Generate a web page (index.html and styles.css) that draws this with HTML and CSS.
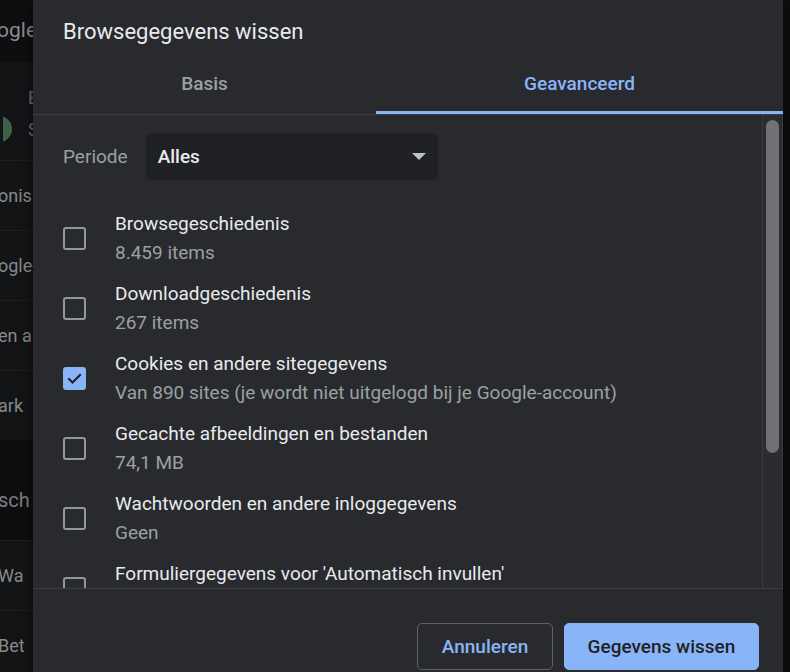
FILE: index.html
```html
<!DOCTYPE html>
<html lang="nl">
<head>
<meta charset="utf-8">
<title>Browsegegevens wissen</title>
<link rel="stylesheet" href="styles.css">
</head>
<body>
<div class="page">
  <div class="page-head">ogle</div>
  <div class="card">
    <div class="card-row profile">
      <span class="avatar-clip"><span class="avatar"></span></span>
      <div class="profile-text">
        <span class="dim">E</span>
        <span class="dim">S</span>
      </div>
    </div>
    <div class="card-row">onis</div>
    <div class="card-row">ogle-</div>
    <div class="card-row">en a</div>
    <div class="card-row">ark</div>
  </div>
  <div class="page-section">sch</div>
  <div class="card card-lower">
    <div class="card-row">Wa</div>
    <div class="card-row">Bet</div>
  </div>
</div>

<div class="dialog">
  <h1 class="dialog-title">Browsegegevens wissen</h1>
  <div class="tabs">
    <div class="tab tab-basic">Basis</div>
    <div class="tab tab-adv active">Geavanceerd</div>
  </div>
  <div class="body">
    <div class="scroll-content">
      <div class="period">
        <span class="period-label">Periode</span>
        <div class="select">
          <span>Alles</span>
          <span class="arrow"></span>
        </div>
      </div>
      <div class="option">
        <span class="box"></span>
        <div class="option-text">
          <div class="option-title">Browsegeschiedenis</div>
          <div class="option-sub">8.459 items</div>
        </div>
      </div>
      <div class="option">
        <span class="box"></span>
        <div class="option-text">
          <div class="option-title">Downloadgeschiedenis</div>
          <div class="option-sub">267 items</div>
        </div>
      </div>
      <div class="option">
        <span class="box checked">
          <svg viewBox="0 0 24 24" width="19" height="19"><path d="M5 12.5l4.5 4.5L19 7.5" fill="none" stroke="#202124" stroke-width="2.6" stroke-linecap="square"/></svg>
        </span>
        <div class="option-text">
          <div class="option-title">Cookies en andere sitegegevens</div>
          <div class="option-sub">Van 890 sites (je wordt niet uitgelogd bij je Google-account)</div>
        </div>
      </div>
      <div class="option">
        <span class="box"></span>
        <div class="option-text">
          <div class="option-title">Gecachte afbeeldingen en bestanden</div>
          <div class="option-sub">74,1 MB</div>
        </div>
      </div>
      <div class="option">
        <span class="box"></span>
        <div class="option-text">
          <div class="option-title">Wachtwoorden en andere inloggegevens</div>
          <div class="option-sub">Geen</div>
        </div>
      </div>
      <div class="option">
        <span class="box"></span>
        <div class="option-text">
          <div class="option-title">Formuliergegevens voor 'Automatisch invullen'</div>
          <div class="option-sub">Geen</div>
        </div>
      </div>
    </div>
    <div class="scrollbar"><div class="thumb"></div></div>
  </div>
  <div class="footer">
    <button class="btn btn-cancel">Annuleren</button>
    <button class="btn btn-primary">Gegevens wissen</button>
  </div>
</div>
</body>
</html>
```

FILE: styles.css
```css
* { box-sizing: border-box; }
html, body { height: 100%; }
body {
  margin: 0;
  background: #0d0e0f;
  font-family: Roboto, "Noto Sans", "Liberation Sans", sans-serif;
  overflow: hidden;
  position: relative;
}

/* background settings page (dimmed by scrim), clipped by the dialog edge */
.page {
  width: 33px;
  overflow: hidden;
  color: #87898c;
  font-size: 18px;
}
.page-head {
  height: 62px;
  padding-top: 18px;
  margin-left: -3px;
  font-size: 21px;
  color: #8b8d90;
  white-space: nowrap;
}
.card {
  background: #131416;
}
.card-row {
  height: 70px;
  display: flex;
  align-items: center;
  border-top: 1px solid #1d1e20;
  white-space: nowrap;
  margin-left: -2px;
}
.card-row:first-child { border-top: none; }
.profile { height: 98px; margin-left: 0; }
.avatar-clip {
  width: 9px;
  height: 26px;
  margin-left: 3px;
  margin-top: 36px;
  overflow: hidden;
  flex: none;
}
.avatar {
  display: block;
  width: 26px; height: 26px;
  margin-left: -17px;
  border-radius: 50%;
  background: #3d6149;
}
.profile-text {
  display: flex;
  flex-direction: column;
  gap: 11px;
  padding-left: 16px;
  margin-top: 4px;
}
.dim { color: #6b6d70; }
.page-section {
  height: 100px;
  display: flex;
  align-items: center;
  padding-top: 20px;
  font-size: 20px;
  color: #7c7e81;
  white-space: nowrap;
  margin-left: -2px;
}
.card-lower .card-row { border-top: 1px solid #1d1e20; }

/* dialog */
.dialog {
  position: absolute;
  left: 33px;
  top: 0;
  width: 750px;
  height: 700px;
  background: #292a2d;
  display: flex;
  flex-direction: column;
  box-shadow: 0 0 12px rgba(0,0,0,0.5);
}
.dialog-title {
  margin: 0;
  padding: 19px 30px 0;
  height: 52px;
  font-size: 22px;
  line-height: 26px;
  font-weight: 400;
  color: #e8eaed;
}
.tabs {
  display: flex;
  height: 63px;
  border-bottom: 1px solid #3c3d40;
}
.tab {
  display: flex;
  align-items: center;
  justify-content: center;
  font-size: 19px;
  font-weight: 500;
  color: #9aa0a6;
  padding-top: 4px;
  border-bottom: 3px solid transparent;
}
.tab-basic { width: 343px; }
.tab-adv { flex: 1; }
.tab.active { color: #8ab4f8; border-bottom-color: #8ab4f8; }

.body {
  height: 473px;
  display: flex;
  overflow: hidden;
}
.scroll-content {
  flex: 1;
  padding: 18px 0 0 30px;
  overflow: hidden;
}
.period {
  display: flex;
  align-items: center;
  gap: 18px;
}
.period-label { font-size: 19px; color: #9aa0a6; }
.select {
  width: 292px;
  height: 47px;
  background: #202124;
  border-radius: 5px;
  display: flex;
  align-items: center;
  justify-content: space-between;
  padding: 0 12px 0 12px;
  font-size: 19px;
  font-weight: 500;
  color: #e8eaed;
}
.arrow {
  width: 0; height: 0;
  border-left: 7px solid transparent;
  border-right: 7px solid transparent;
  border-top: 7px solid #bdc1c6;
}

.option {
  height: 70px;
  display: flex;
  align-items: center;
  gap: 29px;
}
.period + .option { margin-top: 23px; }
.box {
  width: 23px; height: 23px;
  border: 2px solid #94979b;
  border-radius: 3px;
  flex: none;
  display: flex;
  align-items: center;
  justify-content: center;
}
.box.checked { background: #8ab4f8; border-color: #8ab4f8; }
.option-text { display: flex; flex-direction: column; gap: 5px; }
.option-title { font-size: 19px; line-height: 24px; color: #e8eaed; }
.option-sub { font-size: 19px; line-height: 24px; color: #9aa0a6; }

.scrollbar {
  width: 21px;
  border-left: 1px solid #3a3b3e;
  border-right: 1px solid #3a3b3e;
  background: #2b2c2f;
  padding: 5px 3px 0 3px;
  flex: none;
}
.thumb {
  height: 333px;
  border-radius: 7px;
  background: #707174;
}

.footer {
  border-top: 1px solid #3c3d40;
  display: flex;
  justify-content: flex-end;
  gap: 11px;
  padding: 34px 24px 0 0;
}
.btn {
  height: 47px;
  border-radius: 5px;
  font-family: inherit;
  font-size: 19px;
  font-weight: 500;
  padding: 0;
}
.btn-cancel {
  width: 136px;
  background: transparent;
  border: 1px solid #5f6368;
  color: #8ab4f8;
}
.btn-primary {
  width: 195px;
  background: #8ab4f8;
  border: 1px solid #8ab4f8;
  color: #202124;
}
```
